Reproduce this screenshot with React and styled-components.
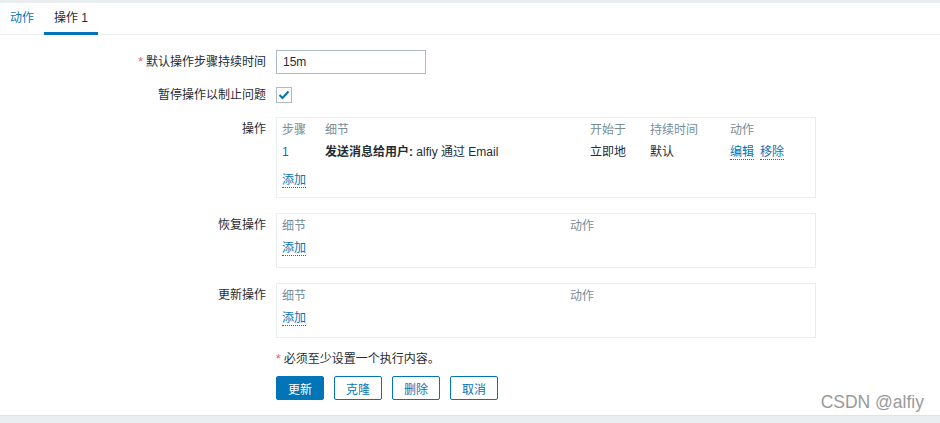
import React from 'react'
import styled, { createGlobalStyle } from 'styled-components'

const Global = createGlobalStyle`
    html, body {
        margin: 0;
        padding: 0;
        background: #ffffff;
    }
    body {
        font-family: 'Liberation Sans', 'Noto Sans CJK SC', sans-serif;
        font-size: 12px;
        color: #1f2c33;
    }
`
const Page = styled.div`
    position: relative;
    width: 940px;
    height: 423px;
    display: flex;
    flex-direction: column;
    background: #ebeef0;
    overflow: hidden;
`
const Panel = styled.div`
    margin-top: 3px;
    height: 413px;
    background: #ffffff;
    border-bottom: 1px solid #dfe4e7;
    box-sizing: border-box;
`
const TabBar = styled.ul`
    display: flex;
    margin: 0;
    padding: 0;
    list-style: none;
    height: 31px;
    border-bottom: 1px solid #ebeef0;
`
const Tab = styled.li`
    padding: 0 10px;
    line-height: 30px;
    color: ${(p) => (p.active ? '#1f2c33' : '#0275b8')};
    border-bottom: 3px solid ${(p) => (p.active ? '#0275b8' : 'transparent')};
    margin-bottom: -1px;
`
const Form = styled.div`
    display: flex;
    flex-direction: column;
    padding-top: 15px;
`
const Row = styled.div`
    display: flex;
    align-items: ${(p) => (p.top ? 'flex-start' : 'center')};
    margin-bottom: ${(p) => p.gap || 15}px;
`
const Label = styled.label`
    width: 266px;
    padding-right: 10px;
    box-sizing: content-box;
    text-align: right;
    line-height: ${(p) => (p.top ? '24px' : '16px')};
    flex-shrink: 0;
`
const Req = styled.span`
    color: #e45959;
    margin-right: 3px;
`
const Input = styled.input`
    width: 150px;
    height: 24px;
    box-sizing: border-box;
    border: 1px solid #acbbc2;
    padding: 0 6px;
    font: inherit;
    color: #1f2c33;
    outline: none;
`
const Check = styled.span`
    width: 16px;
    height: 16px;
    box-sizing: border-box;
    border: 1px solid #acbbc2;
    display: flex;
    align-items: center;
    justify-content: center;
`
const Box = styled.div`
    width: 540px;
    box-sizing: border-box;
    border: 1px solid #ebeef0;
    padding: 1px 5px ${(p) => p.pb || 8}px;
`
const Line = styled.div`
    display: grid;
    grid-template-columns: ${(p) => p.cols};
    line-height: 22px;
    padding-bottom: ${(p) => p.pb || 0}px;
    color: ${(p) => (p.head ? '#768d99' : '#1f2c33')};
`
const Link = styled.a`
    color: #0275b8;
    text-decoration: none;
    border-bottom: 1px dotted #0275b8;
    cursor: pointer;
    & + & {
        margin-left: 6px;
    }
`
const LinkLine = styled.div`
    line-height: 22px;
`
const Step = styled.span`
    color: #0275b8;
`
const Note = styled.div`
    padding-left: 276px;
    margin-top: -3px;
    line-height: 18px;
`
const Buttons = styled.div`
    display: flex;
    gap: 10px;
    padding-left: 276px;
    margin-top: 8px;
`
const Button = styled.button`
    height: 24px;
    min-width: 48px;
    padding: 0 10px;
    border-radius: 2px;
    font: inherit;
    border: 1px solid #0275b8;
    background: ${(p) => (p.primary ? '#0275b8' : '#ffffff')};
    color: ${(p) => (p.primary ? '#ffffff' : '#0275b8')};
`
const Watermark = styled.div`
    position: absolute;
    right: 16px;
    bottom: 10px;
    font-size: 17.5px;
    color: #9a9a9a;
    font-family: 'Liberation Sans', sans-serif;
`

const opCols = '43px 265px 60px 80px 1fr'
const subCols = '288px 1fr'

export default function App() {
    return (
        <Page>
            <Global />
            <Panel>
                <TabBar>
                    <Tab>动作</Tab>
                    <Tab active>操作 1</Tab>
                </TabBar>
                <Form>
                    <Row gap={13}>
                        <Label><Req>*</Req>默认操作步骤持续时间</Label>
                        <Input defaultValue="15m" />
                    </Row>
                    <Row gap={14}>
                        <Label>暂停操作以制止问题</Label>
                        <Check>
                            <svg width="12" height="10" viewBox="0 0 12 10">
                                <path d="M1.5 5 L4.5 8 L10.5 1.5" fill="none" stroke="#0275b8" strokeWidth="2" />
                            </svg>
                        </Check>
                    </Row>
                    <Row top>
                        <Label top>操作</Label>
                        <Box pb={6}>
                            <Line head cols={opCols}>
                                <span>步骤</span><span>细节</span><span>开始于</span><span>持续时间</span><span>动作</span>
                            </Line>
                            <Line cols={opCols} pb={6}>
                                <Step>1</Step>
                                <span><b>发送消息给用户:</b> alfiy 通过 Email</span>
                                <span>立即地</span>
                                <span>默认</span>
                                <span><Link>编辑</Link><Link>移除</Link></span>
                            </Line>
                            <LinkLine><Link>添加</Link></LinkLine>
                        </Box>
                    </Row>
                    <Row top>
                        <Label top>恢复操作</Label>
                        <Box>
                            <Line head cols={subCols}><span>细节</span><span>动作</span></Line>
                            <LinkLine><Link>添加</Link></LinkLine>
                        </Box>
                    </Row>
                    <Row top>
                        <Label top>更新操作</Label>
                        <Box>
                            <Line head cols={subCols}><span>细节</span><span>动作</span></Line>
                            <LinkLine><Link>添加</Link></LinkLine>
                        </Box>
                    </Row>
                    <Note><Req>*</Req>必须至少设置一个执行内容。</Note>
                    <Buttons>
                        <Button primary>更新</Button>
                        <Button>克隆</Button>
                        <Button>删除</Button>
                        <Button>取消</Button>
                    </Buttons>
                </Form>
            </Panel>
            <Watermark>CSDN @alfiy</Watermark>
        </Page>
    )
}
